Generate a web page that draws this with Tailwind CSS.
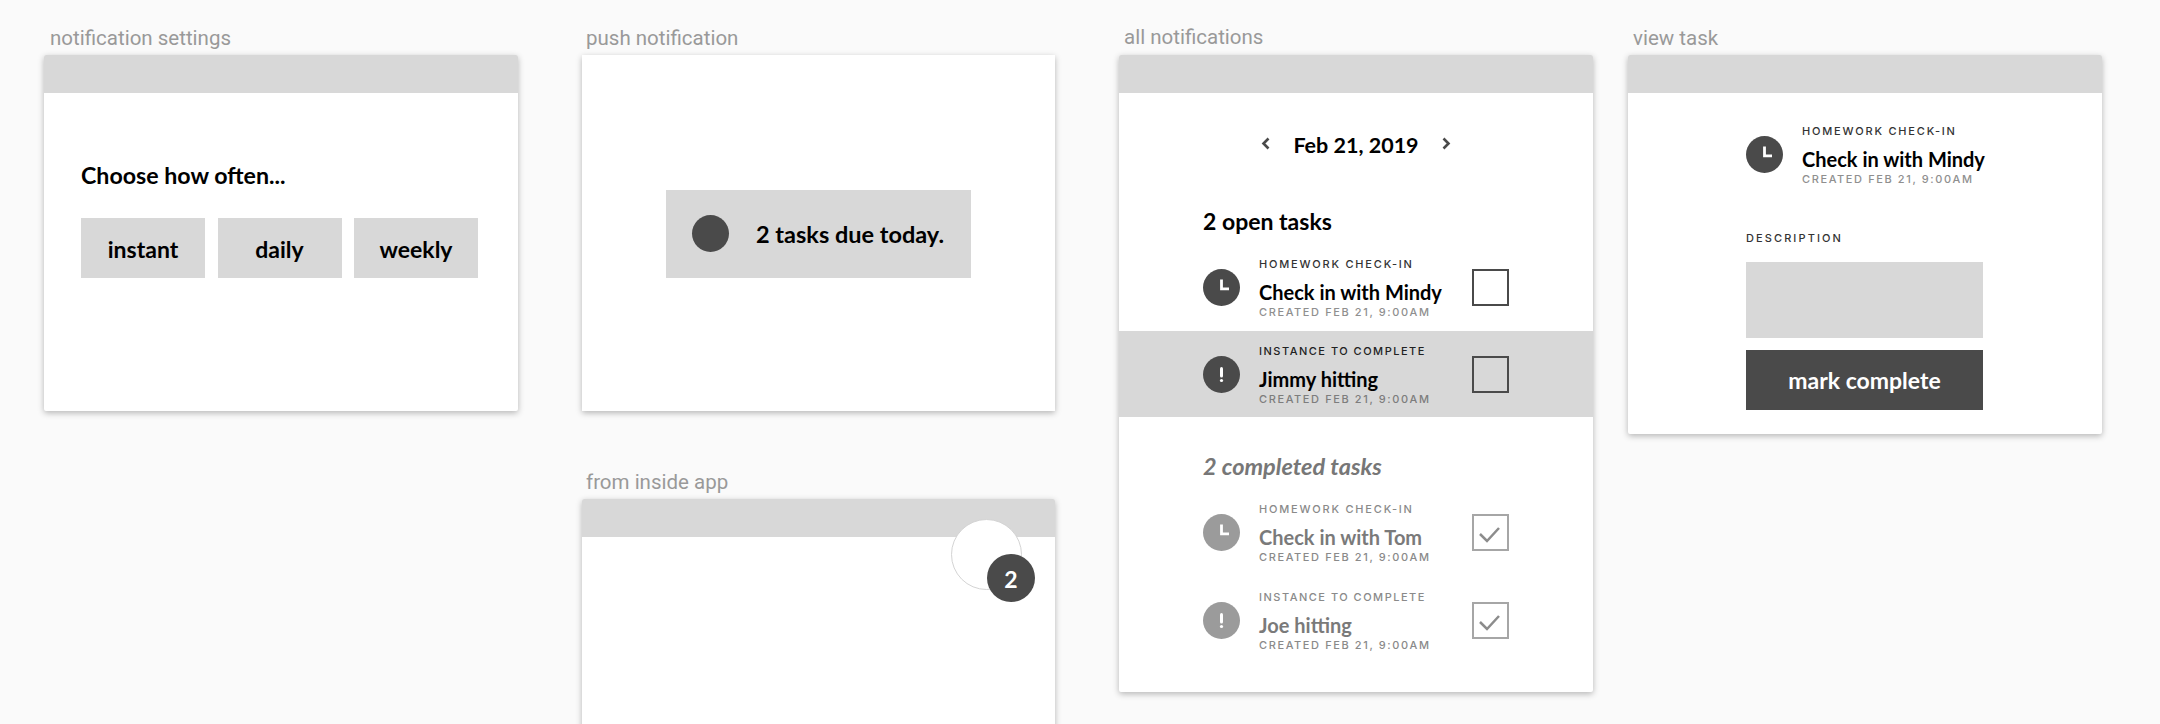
<!DOCTYPE html>
<html lang="en">

<head>
    <meta charset="UTF-8">
    <title>Notification wireframes</title>
    <script src="https://cdn.jsdelivr.net/npm/@tailwindcss/browser@4"></script>
</head>

<body class="bg-[#fafafa]">
    <div class="flex h-[724px] w-[2160px] items-start overflow-hidden pl-[44px] font-['Lato',sans-serif]">

        <!-- notification settings -->
        <div class="w-[474px] shrink-0">
            <p class="pl-[6px] pt-[26px] h-[55px] text-[20.5px] leading-[24px] text-[#999999] font-['Roboto',sans-serif]">notification settings</p>
            <div class="rounded-[2px] bg-white shadow-[0_2px_6px_rgba(0,0,0,0.28)]">
                <div class="h-[38px] rounded-t-[2px] bg-[#d8d8d8]"></div>
                <div class="h-[318px] pl-[37px] pt-[67px]">
                    <p class="text-[23.2px] leading-[30px] font-bold text-black">Choose how often...</p>
                    <div class="mt-[28px] flex gap-[12.5px]">
                        <div class="flex h-[60px] w-[124px] items-center justify-center bg-[#d8d8d8] pt-[3px] text-[23px] font-bold text-black">instant</div>
                        <div class="flex h-[60px] w-[124px] items-center justify-center bg-[#d8d8d8] pt-[3px] text-[23px] font-bold text-black">daily</div>
                        <div class="flex h-[60px] w-[124px] items-center justify-center bg-[#d8d8d8] pt-[3px] text-[23px] font-bold text-black">weekly</div>
                    </div>
                </div>
            </div>
        </div>

        <!-- push notification + from inside app -->
        <div class="ml-[64px] w-[473px] shrink-0">
            <p class="pl-[4px] pt-[26px] h-[55px] text-[20.5px] leading-[24px] text-[#999999] font-['Roboto',sans-serif]">push notification</p>
            <div class="flex h-[356px] items-center justify-center bg-white pt-[1px] shadow-[0_2px_6px_rgba(0,0,0,0.28)]">
                <div class="flex h-[88px] w-[305px] items-center gap-[27px] bg-[#d8d8d8] pl-[26px]">
                    <div class="h-[37px] w-[37px] rounded-full bg-[#4a4a4a]"></div>
                    <p class="pt-[3px] text-[23.5px] font-bold text-black">2 tasks due today.</p>
                </div>
            </div>
            <p class="pl-[4px] pt-[59px] h-[88px] text-[20.5px] leading-[24px] text-[#999999] font-['Roboto',sans-serif]">from inside app</p>
            <div class="relative h-[400px] rounded-[2px] bg-white shadow-[0_2px_6px_rgba(0,0,0,0.28)]">
                <div class="h-[38px] rounded-t-[2px] bg-[#d8d8d8]"></div>
                <div class="absolute left-[369px] top-[20px] h-[71px] w-[71px] rounded-full border border-[#d4d4d4] bg-white"></div>
                <div class="absolute left-[405px] top-[55px] flex h-[48px] w-[48px] items-center justify-center rounded-full bg-[#4a4a4a] pt-[3px] text-[23px] font-bold text-white">2</div>
            </div>
        </div>

        <!-- all notifications -->
        <div class="ml-[64px] w-[474px] shrink-0">
            <p class="pl-[5px] pt-[25px] h-[55px] text-[20.5px] leading-[24px] text-[#999999] font-['Roboto',sans-serif]">all notifications</p>
            <div class="rounded-[2px] bg-white pb-[28px] shadow-[0_2px_6px_rgba(0,0,0,0.28)]">
                <div class="h-[38px] rounded-t-[2px] bg-[#d8d8d8]"></div>

                <div class="mt-[37px] flex items-center justify-center gap-[23px]">
                    <svg class="mb-[3px] h-[13px] w-[9px]" viewBox="0 0 9 13" fill="none" stroke="#4a4a4a" stroke-width="2.6"><path d="M7.5 1.5 L2.5 6.5 L7.5 11.5" /></svg>
                    <p class="text-[21.5px] leading-[30px] font-bold text-black">Feb 21, 2019</p>
                    <svg class="mb-[3px] h-[13px] w-[9px]" viewBox="0 0 9 13" fill="none" stroke="#4a4a4a" stroke-width="2.6"><path d="M1.5 1.5 L6.5 6.5 L1.5 11.5" /></svg>
                </div>

                <p class="mt-[46px] pl-[84px] text-[23px] leading-[30px] font-bold text-black">2 open tasks</p>

                <div class="mt-[7px] flex h-[88px] items-center pl-[84px] pr-[84px]">
                    <svg class="h-[37px] w-[37px] shrink-0" viewBox="0 0 37 37"><circle cx="18.5" cy="18.5" r="18.5" fill="#4a4a4a" /><path d="M18.5 10.5 V19.8 H26" fill="none" stroke="#fff" stroke-width="2.8" /></svg>
                    <div class="ml-[19px]">
                        <p class="text-[11px] leading-[16px] font-medium tracking-[1.8px] text-[#333333] font-['Inter',sans-serif]">HOMEWORK CHECK-IN</p>
                        <p class="mt-[8px] text-[20px] leading-[24px] font-bold text-black">Check in with Mindy</p>
                        <p class="mt-[1px] text-[11px] leading-[14px] font-medium tracking-[1.6px] text-[#8f8f8f] font-['Inter',sans-serif]">CREATED FEB 21, 9:00AM</p>
                    </div>
                    <div class="ml-auto h-[37px] w-[37px] shrink-0 border-2 border-[#4a4a4a]"></div>
                </div>

                <div class="flex h-[86px] items-center bg-[#d8d8d8] pl-[84px] pr-[84px]">
                    <svg class="h-[37px] w-[37px] shrink-0" viewBox="0 0 37 37"><circle cx="18.5" cy="18.5" r="18.5" fill="#4a4a4a" /><path d="M18.5 12.5 V20" fill="none" stroke="#fff" stroke-width="3" stroke-linecap="round" /><circle cx="18.5" cy="24.5" r="1.6" fill="#fff" /></svg>
                    <div class="ml-[19px]">
                        <p class="text-[11px] leading-[16px] font-medium tracking-[1.5px] text-[#222222] font-['Inter',sans-serif]">INSTANCE TO COMPLETE</p>
                        <p class="mt-[8px] text-[20px] leading-[24px] font-bold text-black">Jimmy hitting</p>
                        <p class="mt-[1px] text-[11px] leading-[14px] font-medium tracking-[1.6px] text-[#7d7d7d] font-['Inter',sans-serif]">CREATED FEB 21, 9:00AM</p>
                    </div>
                    <div class="ml-auto h-[37px] w-[37px] shrink-0 border-2 border-[#4a4a4a]"></div>
                </div>

                <p class="mt-[34px] pl-[84px] text-[23.5px] leading-[30px] font-bold italic text-[#777777]">2 completed tasks</p>

                <div class="mt-[7px] flex h-[88px] items-center pl-[84px] pr-[84px]">
                    <svg class="h-[37px] w-[37px] shrink-0" viewBox="0 0 37 37"><circle cx="18.5" cy="18.5" r="18.5" fill="#9b9b9b" /><path d="M18.5 10.5 V19.8 H26" fill="none" stroke="#fff" stroke-width="2.8" /></svg>
                    <div class="ml-[19px]">
                        <p class="text-[11px] leading-[16px] font-medium tracking-[1.8px] text-[#8a8a8a] font-['Inter',sans-serif]">HOMEWORK CHECK-IN</p>
                        <p class="mt-[8px] text-[20px] leading-[24px] font-bold text-[#7a7a7a]">Check in with Tom</p>
                        <p class="mt-[1px] text-[11px] leading-[14px] font-medium tracking-[1.6px] text-[#8a8a8a] font-['Inter',sans-serif]">CREATED FEB 21, 9:00AM</p>
                    </div>
                    <svg class="ml-auto h-[37px] w-[37px] shrink-0 border-2 border-[#a6a6a6]" viewBox="0 0 33 33" fill="none" stroke="#8c8c8c" stroke-width="2.5"><path d="M6 18 L13 25 L25 12" /></svg>
                </div>

                <div class="flex h-[88px] items-center pl-[84px] pr-[84px]">
                    <svg class="h-[37px] w-[37px] shrink-0" viewBox="0 0 37 37"><circle cx="18.5" cy="18.5" r="18.5" fill="#9b9b9b" /><path d="M18.5 12.5 V20" fill="none" stroke="#fff" stroke-width="3" stroke-linecap="round" /><circle cx="18.5" cy="24.5" r="1.6" fill="#fff" /></svg>
                    <div class="ml-[19px]">
                        <p class="text-[11px] leading-[16px] font-medium tracking-[1.5px] text-[#8a8a8a] font-['Inter',sans-serif]">INSTANCE TO COMPLETE</p>
                        <p class="mt-[8px] text-[20px] leading-[24px] font-bold text-[#7a7a7a]">Joe hitting</p>
                        <p class="mt-[1px] text-[11px] leading-[14px] font-medium tracking-[1.6px] text-[#8a8a8a] font-['Inter',sans-serif]">CREATED FEB 21, 9:00AM</p>
                    </div>
                    <svg class="ml-auto h-[37px] w-[37px] shrink-0 border-2 border-[#a6a6a6]" viewBox="0 0 33 33" fill="none" stroke="#8c8c8c" stroke-width="2.5"><path d="M6 18 L13 25 L25 12" /></svg>
                </div>
            </div>
        </div>

        <!-- view task -->
        <div class="ml-[35px] w-[474px] shrink-0">
            <p class="pl-[5px] pt-[26px] h-[55px] text-[20.5px] leading-[24px] text-[#999999] font-['Roboto',sans-serif]">view task</p>
            <div class="rounded-[2px] bg-white shadow-[0_2px_6px_rgba(0,0,0,0.28)]">
                <div class="h-[38px] rounded-t-[2px] bg-[#d8d8d8]"></div>
                <div class="pb-[24px] pl-[118px] pt-[30px]">
                    <div class="flex items-center">
                        <svg class="h-[37px] w-[37px] shrink-0" viewBox="0 0 37 37"><circle cx="18.5" cy="18.5" r="18.5" fill="#4a4a4a" /><path d="M18.5 10.5 V19.8 H26" fill="none" stroke="#fff" stroke-width="2.8" /></svg>
                        <div class="ml-[19px]">
                            <p class="text-[11px] leading-[16px] font-medium tracking-[1.8px] text-[#333333] font-['Inter',sans-serif]">HOMEWORK CHECK-IN</p>
                            <p class="mt-[8px] text-[20px] leading-[24px] font-bold text-black">Check in with Mindy</p>
                            <p class="mt-[1px] text-[11px] leading-[14px] font-medium tracking-[1.6px] text-[#8f8f8f] font-['Inter',sans-serif]">CREATED FEB 21, 9:00AM</p>
                        </div>
                    </div>
                    <p class="mt-[44px] text-[11px] leading-[16px] font-medium tracking-[2.1px] text-[#333333] font-['Inter',sans-serif]">DESCRIPTION</p>
                    <div class="mt-[16px] h-[76px] w-[237px] bg-[#d8d8d8]"></div>
                    <div class="mt-[12px] flex h-[60px] w-[237px] items-center justify-center bg-[#4a4a4a] pt-[1px] text-[23px] font-bold text-white">mark complete</div>
                </div>
            </div>
        </div>
    </div>
</body>

</html>
